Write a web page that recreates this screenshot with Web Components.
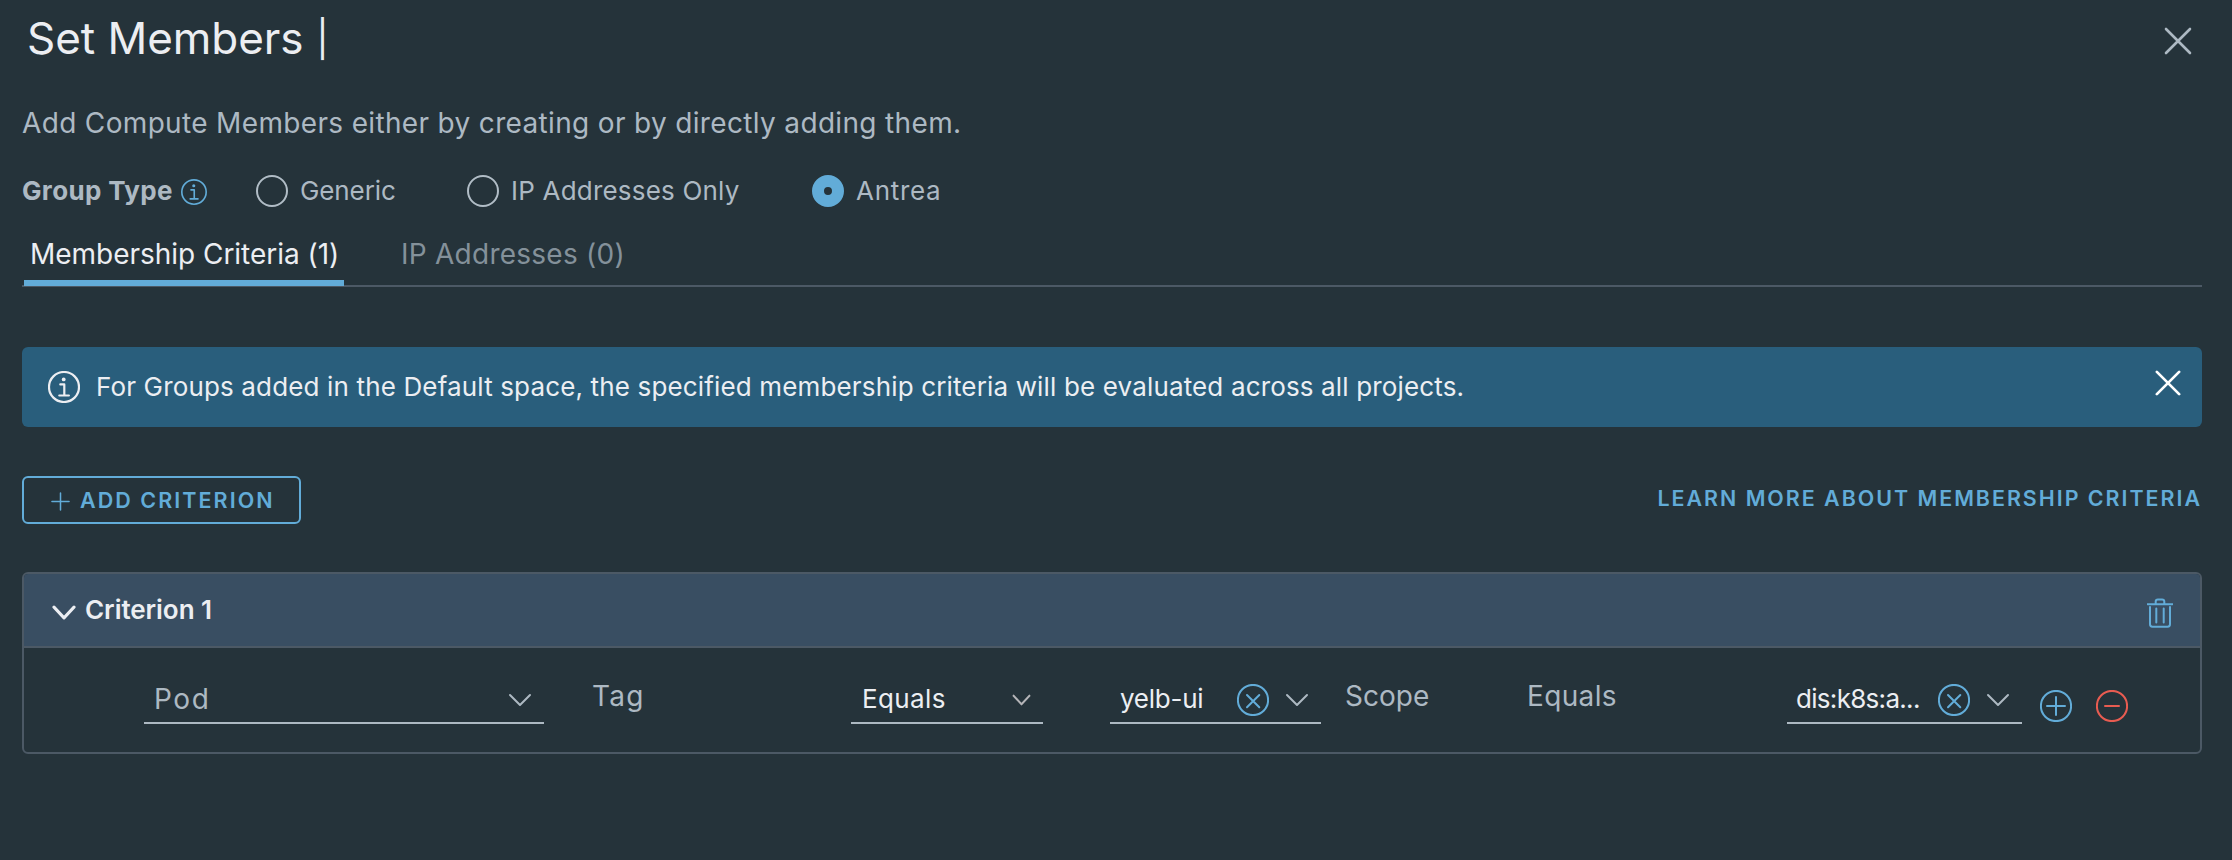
<!DOCTYPE html>
<html lang="en">
<head>
<meta charset="utf-8">
<title>Set Members</title>
<style>
  html { background: #25333a; }
  body { margin: 0; font-family: Inter, "Open Sans", sans-serif; color: #adb9c3; --blue: #62acd8; --light: #eceef2; --line: #4c5965; --field: #adb9c2; }
</style>
</head>
<body>
<members-dialog></members-dialog>
<script>
const ICONS = {
  close: ['0 0 28 28', '<path d="M2 2 26 26M26 2 2 26"/>'],
  info: ['0 0 32 32', '<circle cx="16" cy="16" r="15"/><circle cx="15.7" cy="8.4" r="1.9" fill="currentColor" stroke="none"/><path d="M12.3 13.4h4v11M11.3 24.5h9.6"/>'],
  down: ['0 0 24 14', '<path d="M2 2 12 12 22 2"/>'],
  plus: ['0 0 20 20', '<path d="M10 1v18M1 10h18"/>'],
  add: ['0 0 32 32', '<circle cx="16" cy="16" r="15.1"/><path d="M16 7v18M7 16h18"/>'],
  remove: ['0 0 32 32', '<circle cx="16" cy="16" r="15.1"/><path d="M9 16h14"/>'],
  clear: ['0 0 32 32', '<circle cx="16" cy="16" r="15.1"/><path d="M10 11 22.3 23.3M22.3 11 10 23.3"/>'],
  trash: ['0 0 26 30', '<path d="M.5 6.2h25M8.7 5.5V3.6q0-2.2 2.2-2.2h4.2q2.2 0 2.2 2.2v1.9M3 9v17.3q0 2.4 2.4 2.4h15.2q2.4 0 2.4-2.4V9M9.3 10.5v14M16.7 10.5v14"/>']
};
function define(name, markup, setup) {
  customElements.define(name, class extends HTMLElement {
    connectedCallback() {
      if (this.shadowRoot) return;
      const template = document.createElement('template');
      template.innerHTML = markup;
      this.attachShadow({ mode: 'open' }).append(template.content.cloneNode(true));
      if (setup) setup(this, this.shadowRoot);
    }
  });
}

define('ui-icon', `<style>:host{display:block;flex:none}svg{display:block;width:100%;height:100%;fill:none;stroke:currentColor;stroke-width:var(--sw,2);stroke-linecap:round;stroke-linejoin:round}</style><svg preserveAspectRatio="none"></svg>`, (el, root) => {
  const [box, shapes] = ICONS[el.getAttribute('name')];
  const svg = root.querySelector('svg');
  svg.setAttribute('viewBox', box);
  svg.innerHTML = shapes;
});

define('dialog-header', `<style>
:host{display:flex;justify-content:space-between;height:103px;padding:8px 0 0 5px;box-sizing:border-box}
h1{margin:0;font-size:44px;line-height:60px;font-weight:400;color:var(--light);display:flex;letter-spacing:-.05px}
.bar{font-size:36px;margin-left:13px;font-weight:400;line-height:63px}
ui-icon{width:28px;height:28px;margin:19px 10px 0 0;--sw:2.6}
</style><h1><slot></slot><span class="bar">|</span></h1><ui-icon name="close"></ui-icon>`);

define('ui-radio', `<style>
:host{display:flex;align-items:center;height:40px;font-size:26px;line-height:40px;white-space:nowrap}
i{box-sizing:border-box;width:32px;height:32px;border:2px solid #b1bdc6;border-radius:50%;margin-right:12px;flex:none}
:host([checked]) i{border:12px solid var(--blue)}
span{letter-spacing:var(--ls,0)}
</style><i></i><span><slot></slot></span>`);

define('group-type', `<style>
:host{display:flex;align-items:center;height:40px;margin-top:28px}
b{font-size:26px;line-height:40px;letter-spacing:.35px;width:159px}
ui-icon{width:26px;height:26px;color:var(--blue);margin-top:2px}
.a{margin-left:49px;width:211px;--ls:-.1px}.b{width:345px;--ls:.2px}.c{--ls:.7px}
</style><b>Group Type</b><ui-icon name="info"></ui-icon>
<ui-radio class="a">Generic</ui-radio><ui-radio class="b">IP Addresses Only</ui-radio><ui-radio class="c" checked>Antrea</ui-radio>`);

define('ui-tab', `<style>
:host{display:block;box-sizing:border-box;height:55px;font-size:28px;line-height:44px;color:#84919a;white-space:nowrap;letter-spacing:.25px}
:host([active]){color:var(--light);border-bottom:6px solid var(--blue);letter-spacing:-.03px}
</style><slot></slot>`);

define('ui-tabs', `<style>
:host{display:flex;height:55px;box-sizing:border-box;border-bottom:2px solid var(--line);margin-top:21px;padding-left:2px}
::slotted(ui-tab){height:54px!important}
</style><slot></slot>`);

define('ui-alert', `<style>
:host{display:flex;box-sizing:border-box;height:80px;margin-top:60px;padding:0 21px;border-radius:6px;background:#295e7c;color:var(--light);align-items:center}
.info{width:32px;height:32px;margin:0 14px 0 5px;--sw:2.2}
span{flex:1;font-size:26px;line-height:36px;padding-bottom:1px;letter-spacing:.15px;white-space:nowrap;padding-left:2px}
.x{width:26px;height:26px;color:#fff;--sw:2.9;margin-bottom:8px}
</style><ui-icon class="info" name="info"></ui-icon><span><slot></slot></span><ui-icon class="x" name="close"></ui-icon>`);

define('action-bar', `<style>
:host{display:flex;justify-content:space-between;margin-top:49px;height:48px;color:var(--blue);font-size:21.5px;font-weight:600;white-space:nowrap}
button{box-sizing:border-box;width:279px;height:48px;margin:0;padding:0 0 0 27px;border:2px solid;border-radius:6px;background:none;color:inherit;font:inherit;letter-spacing:2.05px;display:flex;align-items:center}
button span{line-height:44px}
ui-icon{width:19px;height:19px;margin:2px 10px 0 0;--sw:1.6}
a{letter-spacing:2px;line-height:44px;font-size:21.4px}
</style><button><ui-icon name="plus"></ui-icon><span>ADD CRITERION</span></button><a>LEARN MORE ABOUT MEMBERSHIP CRITERIA</a>`);

define('combo-field', `<style>
:host{display:flex;box-sizing:border-box;align-items:center;height:48px;border-bottom:2px solid var(--field);padding:0 12px 0 10px;font-size:26px;color:var(--light);margin-top:28px}
span{flex:1;line-height:36px;padding-bottom:1px;letter-spacing:var(--ls,0);white-space:nowrap}
.down{width:24px;height:14px;color:#adb9c2;margin-top:2px}
:host([small]){padding-right:12px}
:host([small]) .down{width:19px;height:12px;color:#b4b4b7;--sw:2.5}
.clear{width:32px;height:32px;color:var(--blue);margin:2px 16px 0 0;display:none}
:host([clearable]) .clear{display:block}
</style><span><slot></slot></span><ui-icon class="clear" name="clear"></ui-icon><ui-icon class="down" name="down"></ui-icon>`);

define('criterion-card', `<style>
:host{display:block;box-sizing:border-box;height:182px;margin-top:48px;border:2px solid var(--line);border-radius:6px;overflow:hidden}
header{display:flex;align-items:center;box-sizing:border-box;height:74px;background:#394e62;border-bottom:2px solid var(--line);color:var(--light);padding:0 27px 0 28px}
header span{flex:1;font-size:26px;font-weight:600;line-height:36px;letter-spacing:-.05px}
.chev{width:24px;height:15px;margin:5px 9px 0 0;--sw:3.1}
.trash{width:26px;height:30px;color:var(--blue);margin-top:5px}
.row{display:grid;grid-template-columns:449px 258px 259px 237px 181px 259px 253px 56px 32px;padding-left:120px;align-items:start}
label{font-size:28px;line-height:40px;margin-top:28px;white-space:nowrap}
.pod{width:400px;font-size:28px;color:#adb9c2;--ls:1.6px}
.tag{letter-spacing:1.3px;margin-left:-1px}.eq{width:192px;--ls:.4px;padding-left:11px}.val{width:211px;--ls:-.25px;padding-right:12px}
.scope{margin-left:-2px}.equals{letter-spacing:.35px;margin-left:-1px}.dis{width:235px;padding-right:12px;padding-left:9px;--ls:-.7px}
.dis,.val{box-sizing:border-box}.btn{width:32px;height:32px;margin-top:42px}.add{color:var(--blue)}.rem{color:#e85c51}
</style>
<header><ui-icon class="chev" name="down"></ui-icon><span><slot></slot></span><ui-icon class="trash" name="trash"></ui-icon></header>
<div class="row">
<combo-field class="pod">Pod</combo-field><label class="tag">Tag</label>
<combo-field class="eq" small>Equals</combo-field><combo-field class="val" clearable>yelb-ui</combo-field>
<label class="scope">Scope</label><label class="equals">Equals</label>
<combo-field class="dis" clearable>dis:k8s:a...</combo-field>
<ui-icon class="btn add" name="add"></ui-icon><ui-icon class="btn rem" name="remove"></ui-icon>
</div>`);

define('members-dialog', `<style>
:host{display:block;box-sizing:border-box;width:2232px;height:860px;padding:0 30px 0 22px;background:#25333a;overflow:hidden}
p{margin:0;font-size:28px;line-height:40px;letter-spacing:.34px;white-space:nowrap}
.t1{width:320px;padding-left:6px}.t2{padding-left:57px}
</style>
<dialog-header>Set Members</dialog-header>
<p>Add Compute Members either by creating or by directly adding them.</p>
<group-type></group-type>
<ui-tabs><ui-tab class="t1" active>Membership Criteria (1)</ui-tab><ui-tab class="t2">IP Addresses (0)</ui-tab></ui-tabs>
<ui-alert>For Groups added in the Default space, the specified membership criteria will be evaluated across all projects.</ui-alert>
<action-bar></action-bar>
<criterion-card>Criterion 1</criterion-card>`);
</script>
</body>
</html>
